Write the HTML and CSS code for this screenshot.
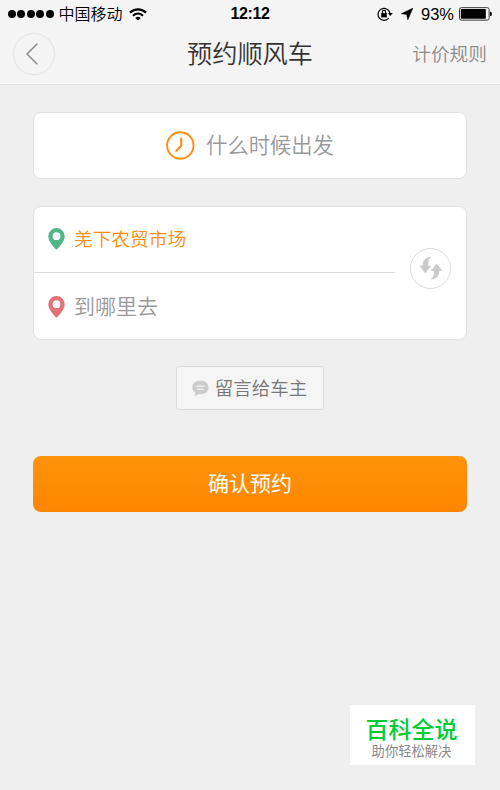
FILE: index.html
```html
<!DOCTYPE html>
<html lang="zh-CN">
<head>
    <meta charset="UTF-8">
    <meta name="viewport" content="width=device-width, initial-scale=1.0">
    <title>预约顺风车</title>
    <link rel="stylesheet" href="styles.css">
</head>
<body>
    <header class="header">
        <div class="status-bar">
            <div class="status-left">
                <div class="signal"><i></i><i></i><i></i><i></i><i></i></div>
                <span class="carrier">中国移动</span>
                <svg class="wifi" width="18" height="13" viewBox="0 0 18 13" fill="none" stroke="#000">
                    <path d="M1 4.6C5.5 0.2 12.5 0.2 17 4.6" stroke-width="2.2"/>
                    <path d="M4 7.7C7 4.9 11 4.9 14 7.7" stroke-width="2"/>
                    <path d="M6.3 9.9Q9 7.6 11.7 9.9L9 12.6Z" fill="#000" stroke="none"/>
                </svg>
            </div>
            <span class="time">12:12</span>
            <div class="status-right">
                <svg class="lock" width="16" height="14" viewBox="0 0 16 14">
                    <path d="M11.8 11A6 6 0 1 1 12.9 6" fill="none" stroke="#000" stroke-width="1.2"/>
                    <path d="M10.8 6H15.8L13.3 9Z"/>
                    <rect x="4.2" y="6.1" width="5.6" height="4.3"/>
                    <path d="M5.4 6.5V5A1.6 1.6 0 0 1 8.6 5V6.5" fill="none" stroke="#000" stroke-width="1.1"/>
                </svg>
                <svg class="arrow" width="12" height="12" viewBox="0 0 12 12">
                    <path d="M12 0L0 5.8L5.6 6.6L6.8 12Z" stroke="#000" stroke-width="0.4"/>
                </svg>
                <span class="percent">93%</span>
                <svg class="battery" width="34" height="14" viewBox="0 0 34 14">
                    <rect x="0.5" y="0.7" width="29.6" height="12.4" rx="1.8" fill="#fff" stroke="#333"/>
                    <rect x="1.8" y="2" width="25" height="9.8" rx="0.5"/>
                    <path d="M31 4.6Q33 4.9 33 6.9T31 9.2Z"/>
                </svg>
            </div>
        </div>
        <div class="nav">
            <button class="back">
                <svg width="42" height="42" viewBox="0 0 42 42" fill="none">
                    <path d="M24.3 10.8L14 21L24.3 31.2" stroke="#8c8c8c" stroke-width="1.5"/>
                </svg>
            </button>
            <h1>预约顺风车</h1>
            <a class="rules">计价规则</a>
        </div>
    </header>

    <main class="content">
        <div class="card time-card">
            <svg width="30" height="30" viewBox="0 0 30 30" fill="none" stroke="#ff8c0a" stroke-linecap="round" stroke-linejoin="round">
                <circle cx="14.3" cy="14.5" r="13.2" stroke-width="1.9"/>
                <path d="M15.2 7.5V14.7L10.3 19.9" stroke-width="2.1"/>
            </svg>
            <span>什么时候出发</span>
        </div>

        <div class="card route-card">
            <div class="route">
                <div class="place from">
                    <svg width="17" height="22" viewBox="0 0 17 22">
                        <path fill="#52b585" fill-rule="evenodd" d="M8.5 0A8.2 8.2 0 0 1 16.7 8.2C16.7 13 12 18.5 8.5 21.8C5 18.5 0.3 13 0.3 8.2A8.2 8.2 0 0 1 8.5 0ZM8.5 4.3A3.9 3.9 0 1 0 8.5 12.1A3.9 3.9 0 1 0 8.5 4.3Z"/>
                    </svg>
                    <span>羌下农贸市场</span>
                </div>
                <div class="place to">
                    <svg width="17" height="22" viewBox="0 0 17 22">
                        <path fill="#e37177" fill-rule="evenodd" d="M8.5 0A8.2 8.2 0 0 1 16.7 8.2C16.7 13 12 18.5 8.5 21.8C5 18.5 0.3 13 0.3 8.2A8.2 8.2 0 0 1 8.5 0ZM8.5 4.3A3.9 3.9 0 1 0 8.5 12.1A3.9 3.9 0 1 0 8.5 4.3Z"/>
                    </svg>
                    <span>到哪里去</span>
                </div>
            </div>
            <button class="swap">
                <svg width="24" height="24" viewBox="0 0 24 24" fill="#cbcbcb">
                    <path d="M12.2 1C6.5 1 3.6 4.5 3.6 9.8H0.4L6.2 17.3L12.2 9.8H9.4C8.8 6 9.6 3 12.2 1Z"/>
                    <path d="M11.6 23.4C17.3 23.4 20.4 19.8 20.4 15H23.5L17.7 7.4L11.7 15H14.8C15.4 18.6 14.5 21.6 11.6 23.4Z"/>
                </svg>
            </button>
        </div>

        <button class="message">
            <svg width="17" height="17" viewBox="0 0 17 17">
                <path fill="#cbcbcb" d="M8.4 0.4C13 0.4 16.5 3.3 16.5 7.4S13 14.2 8.4 14.2Q7.4 14.2 6.5 14L2.8 16.3L3.2 12.4C1.3 11.2 0.3 9.5 0.3 7.4C0.3 3.3 3.8 0.4 8.4 0.4Z"/>
                <path stroke="#f5f5f5" stroke-width="1.2" d="M4.2 6.2H12.6M5 9.2H11.6"/>
            </svg>
            <span>留言给车主</span>
        </button>

        <button class="confirm">确认预约</button>
    </main>

    <div class="watermark">
        <strong>百科全说</strong>
        <span>助你轻松解决</span>
    </div>
</body>
</html>
```
FILE: styles.css
```css
* {
    box-sizing: border-box;
}

body {
    margin: 0;
    height: 790px;
    display: flex;
    flex-direction: column;
    background-color: #efefef;
    font-family: "Liberation Sans", "Noto Sans CJK SC", sans-serif;
    font-weight: 350;
    overflow: hidden;
}

svg {
    display: block;
    flex: none;
}

button {
    font: inherit;
    padding: 0;
    cursor: pointer;
}

.header {
    height: 85px;
    background-color: #f4f4f4;
    border-bottom: 1px solid #e4e4e4;
}

.status-bar {
    display: grid;
    grid-template-columns: 1fr auto 1fr;
    align-items: center;
    height: 28px;
    padding: 0 7px 0 8px;
    font-size: 16px;
    color: #000;
}

.status-left,
.status-right {
    display: flex;
    align-items: center;
}

.status-right {
    justify-content: flex-end;
}

.signal {
    display: flex;
    gap: 1.4px;
}

.signal i {
    width: 8px;
    height: 8px;
    border-radius: 50%;
    background-color: #000;
}

.carrier {
    margin-left: 5px;
    padding-top: 2px;
    line-height: 26px;
}

.wifi {
    margin-left: 6px;
}

.time {
    margin-right: 1px;
    font-size: 16px;
    font-weight: bold;
    letter-spacing: -0.4px;
}

.lock {
    margin-right: 8px;
}

.arrow {
    margin-right: 8px;
}

.percent {
    margin-right: 5px;
    font-size: 16.5px;
}

.nav {
    display: grid;
    grid-template-columns: 1fr auto 1fr;
    align-items: center;
    height: 52px;
    padding: 0 13px;
}

.back {
    width: 42px;
    height: 42px;
    border: none;
    border-radius: 50%;
    background: none;
    box-shadow: inset 0 0 0 1px #e2e2e2;
}

.nav h1 {
    margin: 0;
    padding-bottom: 4px;
    font-size: 25.2px;
    font-weight: 350;
    color: #333;
}

.rules {
    justify-self: end;
    padding-bottom: 4px;
    font-size: 18.7px;
    color: #8c8c8c;
}

.content {
    display: flex;
    flex-direction: column;
    padding: 27px 33px 0;
}

.card {
    display: flex;
    align-items: center;
    background-color: #fff;
    border: 1px solid #e2e2e2;
    border-radius: 8px;
}

.time-card span,
.place span,
.message span {
    padding-bottom: 3px;
}

.time-card {
    justify-content: center;
    gap: 10px;
    height: 67px;
    font-size: 21.3px;
    color: #999;
}

.time-card span {
    padding-bottom: 4px;
}

.route-card {
    height: 134px;
    margin-top: 27px;
}

.route {
    width: 361px;
}

.place {
    display: flex;
    align-items: center;
    gap: 9px;
    height: 66px;
    padding-left: 14px;
}

.from {
    padding-bottom: 1px;
    border-bottom: 1px solid #ddd;
    font-size: 18.7px;
    color: #ff8c0a;
}

.to {
    padding-top: 1px;
    font-size: 21px;
    color: #999;
}

.swap {
    display: flex;
    align-items: center;
    justify-content: center;
    width: 41px;
    height: 41px;
    margin: 0 0 10px 15px;
    background: none;
    border: 1px solid #ddd;
    border-radius: 50%;
}

.message {
    display: flex;
    align-items: center;
    justify-content: center;
    align-self: center;
    gap: 6px;
    width: 148px;
    height: 44px;
    margin-top: 26px;
    padding-right: 1px;
    font-size: 18.5px;
    color: #777;
    background-color: #f5f5f5;
    border: 1px solid #dcdcdc;
    border-radius: 3px;
}

.confirm {
    height: 56px;
    margin-top: 46px;
    padding-bottom: 4px;
    font-size: 21px;
    font-weight: 400;
    color: #fff;
    background: linear-gradient(#ff930a, #ff8500);
    border: none;
    border-radius: 8px;
}

.watermark {
    display: flex;
    flex-direction: column;
    align-items: center;
    align-self: flex-end;
    width: 125px;
    height: 60px;
    margin: auto 25px 25px 0;
    padding: 11px 2px 0 0;
    background-color: #fff;
}

.watermark strong {
    font-size: 23px;
    font-weight: 500;
    line-height: 28px;
    color: #0c3;
}

.watermark span {
    font-size: 13.3px;
    font-weight: 400;
    line-height: 15px;
    color: #888;
}
```
